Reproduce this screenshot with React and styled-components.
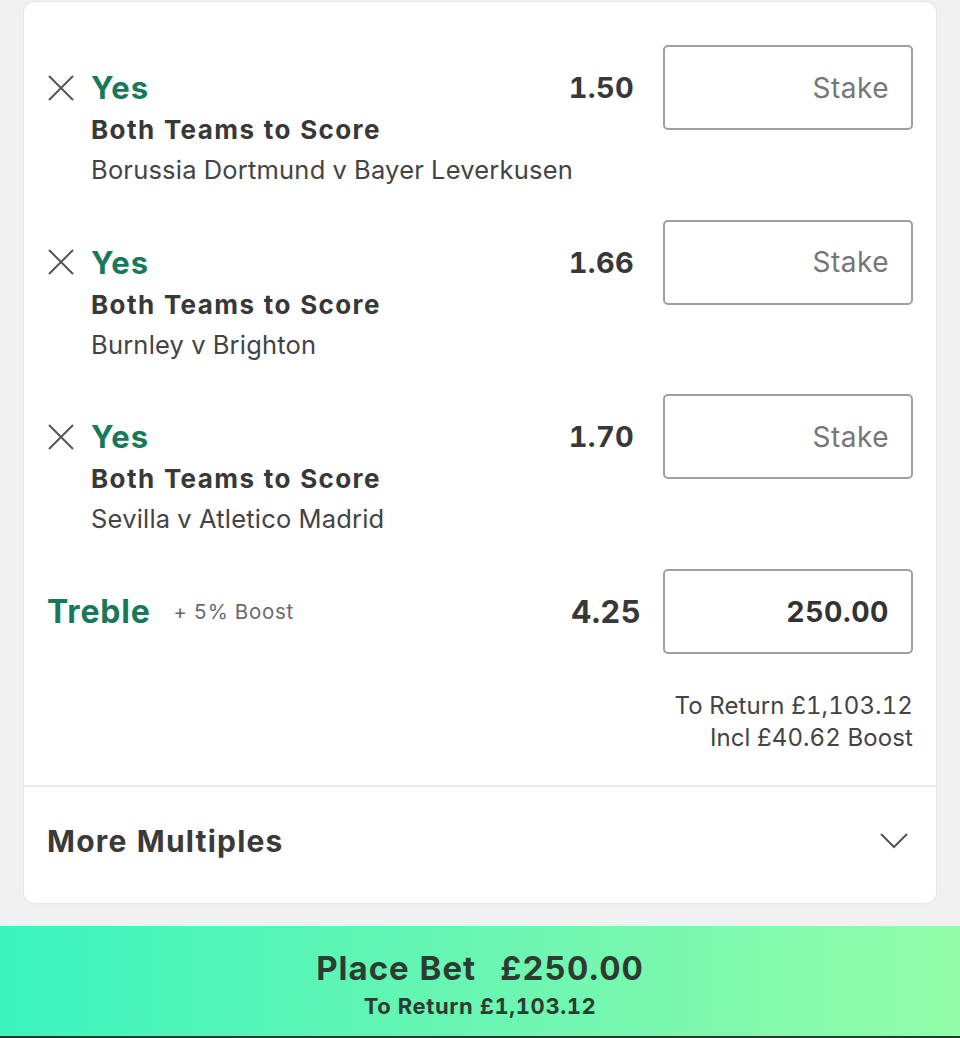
import React from "react";
import styled, { createGlobalStyle } from "styled-components";

const Global = createGlobalStyle`
  html, body { margin: 0; padding: 0; background: #f1f1f1; }
  body {
    font-family: Inter, "Liberation Sans", Arial, sans-serif;
    font-variant-numeric: tabular-nums;
    color: #333;
  }
  * { box-sizing: border-box; }
`;

const Page = styled.div`
  display: flex;
  flex-direction: column;
  min-height: 1038px;
  padding-top: 2px;
`;

const Card = styled.div`
  margin: 0 24px;
  background: #fff;
  border-radius: 10px;
  box-shadow: 0 0 0 1px #e6e6e6, 0 1px 2px rgba(0,0,0,0.06);
  overflow: hidden;
`;

const Slip = styled.div`
  display: flex;
  flex-direction: column;
  gap: 29.5px;
  padding: 43px 23px 31px 23px;
  border-bottom: 2px solid #e9e9e9;
`;

const Row = styled.div`
  display: grid;
  grid-template-columns: 44px minmax(0, 1fr) auto 250px;
  align-items: start;
`;

const RemoveBtn = styled.div`
  height: 85px;
  display: flex;
  align-items: center;
  justify-content: flex-start;
  padding-left: 1px;
`;

const Info = styled.div`
  display: flex;
  flex-direction: column;
  padding-top: 22px;
  min-width: 0;
  white-space: nowrap;
`;

const Selection = styled.div`
  font-size: 31px;
  font-weight: 700;
  color: #17785a;
  line-height: 42px;
  letter-spacing: 1px;
`;

const Market = styled.div`
  font-size: 26px;
  font-weight: 700;
  color: #383838;
  line-height: 41px;
  letter-spacing: 1.4px;
`;

const Event = styled.div`
  font-size: 25.5px;
  font-weight: 400;
  color: #444;
  line-height: 40px;
  letter-spacing: 0.2px;
`;

const Odds = styled.div`
  height: 85px;
  line-height: 85px;
  font-size: ${p => (p.$big ? "31px" : "29px")};
  font-weight: 700;
  color: #383838;
  letter-spacing: 0.3px;
  padding-right: ${p => (p.$big ? "22px" : "29px")};
`;

const StakeBox = styled.div`
  height: 85px;
  border: 2px solid #a0a0a0;
  border-radius: 5px;
  display: flex;
  align-items: center;
  justify-content: flex-end;
  padding-right: 22px;
  font-size: ${p => (p.$filled ? "28.5px" : "28px")};
  letter-spacing: 0.5px;
  font-weight: ${p => (p.$filled ? 700 : 400)};
  color: ${p => (p.$filled ? "#333" : "#767676")};
`;

const MultipleLabel = styled.div`
  grid-column: 1 / 3;
  height: 85px;
  display: flex;
  align-items: center;
  gap: 23px;
`;

const MultipleName = styled.span`
  font-size: 32px;
  font-weight: 700;
  color: #17785a;
  letter-spacing: 0.8px;
`;

const BoostTag = styled.span`
  font-size: 20.5px;
  color: #6a6a6a;
  letter-spacing: 0.7px;
`;

const Returns = styled.div`
  display: flex;
  flex-direction: column;
  align-items: flex-end;
  margin-top: 36px;
  font-size: 24px;
  line-height: 32px;
  letter-spacing: 0.1px;
  color: #444;
`;

const MoreRow = styled.div`
  height: 116px;
  display: flex;
  align-items: center;
  justify-content: space-between;
  padding: 0 28px 8px 23px;
`;

const MoreTitle = styled.div`
  font-size: 30px;
  font-weight: 700;
  color: #3a3a3a;
  letter-spacing: 1.2px;
`;

const Spacer = styled.div`
  height: 23px;
`;

const PlaceBar = styled.div`
  height: 112px;
  background: linear-gradient(90deg, #3bf5bf 0%, #66f5b3 45%, #93fda9 100%);
  border-bottom: 2px solid #1f3d2c;
  display: flex;
  flex-direction: column;
  align-items: center;
  justify-content: center;
  padding-top: 10px;
  color: #2e3b33;
`;

const PlaceTitle = styled.div`
  display: flex;
  gap: 24px;
  font-size: 33px;
  font-weight: 700;
  line-height: 40px;
  letter-spacing: 1px;
`;

const PlaceSub = styled.div`
  font-size: 22px;
  font-weight: 700;
  line-height: 36px;
  letter-spacing: 0.6px;
`;

const CloseIcon = () => (
  <svg width="26" height="26" viewBox="0 0 26 26">
    <path d="M1 1 L25 25 M25 1 L1 25" stroke="#555" strokeWidth="2" fill="none" />
  </svg>
);

const Chevron = () => (
  <svg width="28" height="16" viewBox="0 0 28 16">
    <path d="M1 1 L14 14 L27 1" stroke="#555" strokeWidth="2" fill="none" />
  </svg>
);

const bets = [
  { odds: "1.50", event: "Borussia Dortmund v Bayer Leverkusen" },
  { odds: "1.66", event: "Burnley v Brighton" },
  { odds: "1.70", event: "Sevilla v Atletico Madrid" },
];

export default function App() {
  return (
    <>
      <Global />
      <Page>
        <Card>
          <Slip>
            {bets.map(b => (
              <Row key={b.event}>
                <RemoveBtn>
                  <CloseIcon />
                </RemoveBtn>
                <Info>
                  <Selection>Yes</Selection>
                  <Market>Both Teams to Score</Market>
                  <Event>{b.event}</Event>
                </Info>
                <Odds>{b.odds}</Odds>
                <StakeBox>Stake</StakeBox>
              </Row>
            ))}
            <div>
              <Row>
                <MultipleLabel>
                  <MultipleName>Treble</MultipleName>
                  <BoostTag>+ 5% Boost</BoostTag>
                </MultipleLabel>
                <Odds $big>4.25</Odds>
                <StakeBox $filled>250.00</StakeBox>
              </Row>
              <Returns>
                <span>To Return £1,103.12</span>
                <span>Incl £40.62 Boost</span>
              </Returns>
            </div>
          </Slip>
          <MoreRow>
            <MoreTitle>More Multiples</MoreTitle>
            <Chevron />
          </MoreRow>
        </Card>
        <Spacer />
        <PlaceBar>
          <PlaceTitle>
            <span>Place Bet</span>
            <span>£250.00</span>
          </PlaceTitle>
          <PlaceSub>To Return £1,103.12</PlaceSub>
        </PlaceBar>
      </Page>
    </>
  );
}
